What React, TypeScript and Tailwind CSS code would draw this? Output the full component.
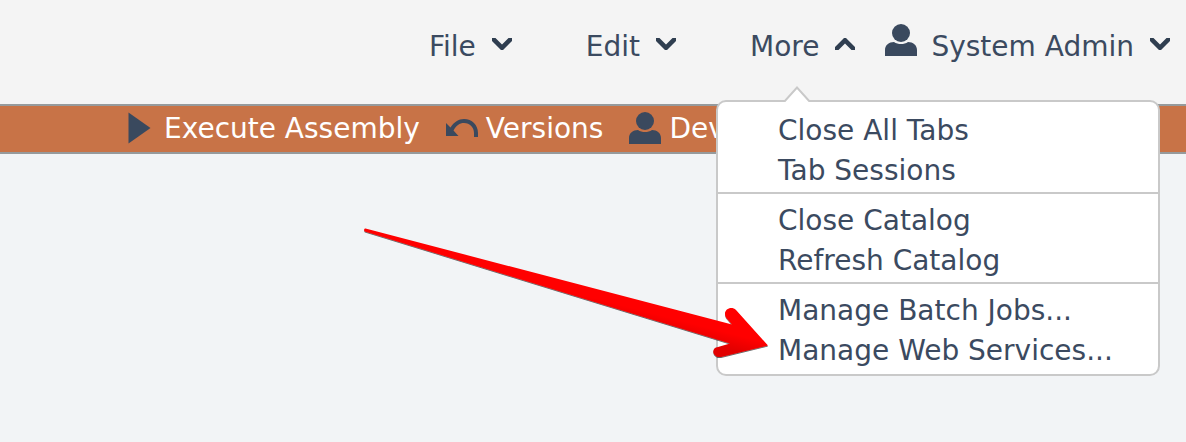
import { ReactNode, useState } from "react";

const menuGroups = [
  ["Close All Tabs", "Tab Sessions"],
  ["Close Catalog", "Refresh Catalog"],
  ["Manage Batch Jobs...", "Manage Web Services..."],
];

function Chevron({ up = false }: { up?: boolean }) {
  return (
    <svg width="20" height="12" viewBox="0 0 20 12" className="mb-1.5 shrink-0" aria-hidden="true">
      <path
        d={up ? "M0 12V9L9 0H11L20 9V12H16.500L10 5.500 3.500 12Z" : "M0 0V3L9 12H11L20 3V0H16.500L10 6.500 3.500 0Z"}
        fill="#2f3e50"
      />
    </svg>
  );
}

function UserIcon() {
  return (
    <svg width="32" height="32" viewBox="0 0 32 32" className="mb-0.5 shrink-0" aria-hidden="true">
      <circle cx="16" cy="9" r="9" fill="#3a495e" />
      <path d="M0 32V26C0 21 4 18 9 18C13 20.700 19 20.700 23 18C28 18 32 21 32 26V32Z" fill="#3a495e" />
    </svg>
  );
}

function PlayIcon() {
  return (
    <svg width="28" height="32" viewBox="0 0 28 32" className="mb-0.5 shrink-0" aria-hidden="true">
      <path d="M0.500 0.500 22.500 16 0.500 31.500Z" fill="#3a495e" />
    </svg>
  );
}

function UndoIcon() {
  return (
    <svg width="32" height="32" viewBox="0 0 32 32" className="mb-0.5 shrink-0" aria-hidden="true">
      <path
        d="M0 11 4.500 15.500C8 10 12.500 7 18 7C26 7 32 13 32 21V25H28V21C28 15.500 24 11 18 11C13.500 11 10 13.500 7.500 18.500L12.500 24H0Z"
        fill="#3a495e"
      />
    </svg>
  );
}

function Tool({ icon, children }: { icon: ReactNode; children: ReactNode }) {
  return (
    <button type="button" className="flex shrink-0 items-center gap-2 leading-8 text-white">
      {icon}
      {children}
    </button>
  );
}

// Red pointer, its tip ends at the last menu entry
function PointerArrow() {
  return (
    <svg
      width="408"
      height="136"
      viewBox="0 0 408 136"
      className="pointer-events-none absolute right-[387px] top-[125px]"
      aria-hidden="true"
    >
      <defs>
        <linearGradient id="pointer" gradientUnits="userSpaceOnUse" x1="246" y1="62" x2="239" y2="89">
          <stop offset="0.450" stopColor="#ff0000" />
          <stop offset="1" stopColor="#e20000" />
        </linearGradient>
        <filter id="pointer-shadow" x="-5%" y="-5%" width="110%" height="115%">
          <feDropShadow dx="0" dy="1" stdDeviation="0.600" floodColor="#000" floodOpacity="0.600" />
        </filter>
      </defs>
      <path
        d="M2.500 1.500 369 97.500 363 90.500C359 83 368 78 373 83L405 118.500 358 130C350 131 347 121 355 120L367 116.500 2 4.500C0.500 3.500 1 1.500 2.500 1.500Z"
        fill="url(#pointer)"
        filter="url(#pointer-shadow)"
      />
    </svg>
  );
}

function MoreMenu() {
  return (
    <div className="absolute left-[-34px] top-[73px] z-10 w-[444px] rounded-[10px] border-2 border-[#c9c9c9] bg-white py-0.5">
      <svg width="28" height="16" viewBox="0 0 28 16" className="absolute left-[65px] top-[-16px]" aria-hidden="true">
        <path d="M1 16 14 1.500 27 16" fill="#fff" stroke="#c9c9c9" strokeWidth="2" />
      </svg>
      {menuGroups.map((group, index) => (
        <ul key={index} className="border-[#c9c9c9] pt-[7px] pb-px not-last-of-type:border-b-2">
          {group.map((label) => (
            <li key={label}>
              <button type="button" className="block w-full whitespace-nowrap pl-[60px] text-left leading-10">
                {label}
              </button>
            </li>
          ))}
        </ul>
      ))}
      <PointerArrow />
    </div>
  );
}

export default function App() {
  const [moreOpen, setMoreOpen] = useState(true);

  return (
    <div className="min-h-screen overflow-hidden bg-[#f2f4f6] font-['DejaVu_Sans',Verdana,sans-serif] text-[28px] text-[#3b4a60]">
      <header className="flex h-[104px] items-start justify-end bg-[#f4f4f4] pt-[27px] pr-4 whitespace-nowrap">
        <nav className="flex">
          <button type="button" className="mr-[74px] flex items-center gap-4 leading-10">
            File
            <Chevron />
          </button>
          <button type="button" className="mr-[74px] flex items-center gap-4 leading-10">
            Edit
            <Chevron />
          </button>
          <div className="relative mr-[30px]">
            <button
              type="button"
              aria-expanded={moreOpen}
              onClick={() => setMoreOpen(!moreOpen)}
              className="flex items-center gap-4 leading-10"
            >
              More
              <Chevron up={moreOpen} />
            </button>
            {moreOpen && <MoreMenu />}
          </div>
        </nav>
        <button type="button" className="-mt-[3px] flex items-start gap-3.5 leading-10">
          <UserIcon />
          <span className="flex items-center gap-4 pt-[3px]">
            System Admin
            <Chevron />
          </span>
        </button>
      </header>

      <div className="flex h-[50px] items-center gap-[26px] border-y-2 border-[#969a9c] bg-[#c87347] pl-32 whitespace-nowrap">
        <Tool icon={<PlayIcon />}>Execute Assembly</Tool>
        <Tool icon={<UndoIcon />}>Versions</Tool>
        <Tool icon={<UserIcon />}>Dev</Tool>
      </div>
    </div>
  );
}
